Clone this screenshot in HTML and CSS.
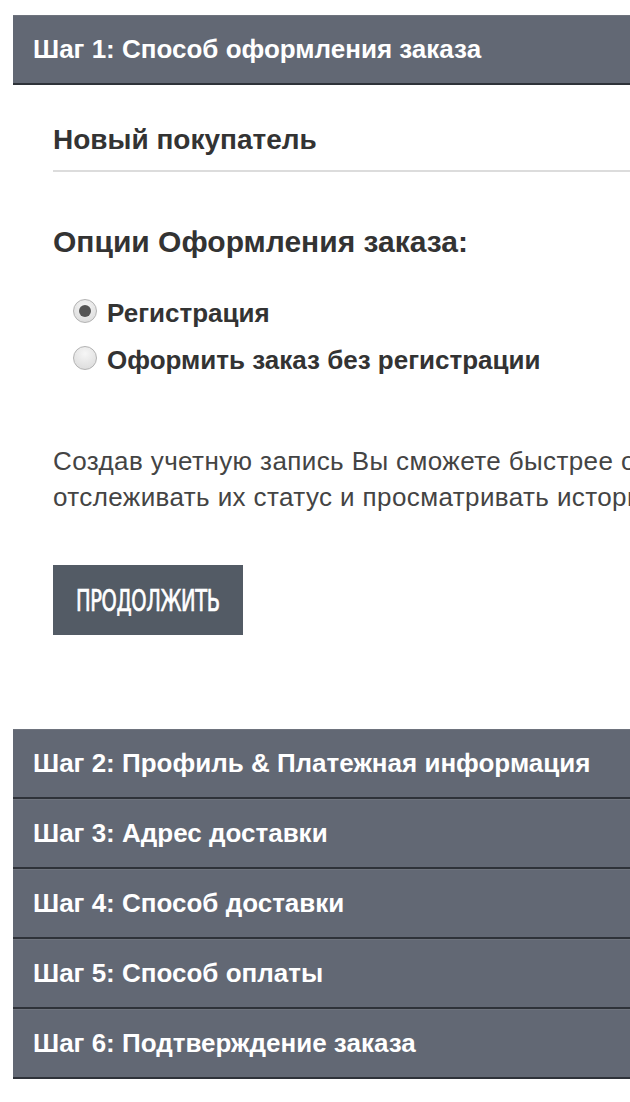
FILE: index.html
```html
<!DOCTYPE html>
<html lang="ru">
<head>
<meta charset="utf-8">
<title>Оформление заказа</title>
<link rel="stylesheet" href="styles.css">
</head>
<body>
<div class="checkout">
  <div class="step">
    <div class="step-head">Шаг 1: Способ оформления заказа</div>
    <div class="step-body">
      <h2 class="title">Новый покупатель</h2>
      <h3 class="subtitle">Опции Оформления заказа:</h3>
      <div class="radios">
        <label class="radio"><input type="radio" name="account" checked><span>Регистрация</span></label>
        <label class="radio"><input type="radio" name="account"><span>Оформить заказ без регистрации</span></label>
      </div>
      <p class="text">Создав учетную запись Вы сможете быстрее оформлять заказы, отслеживать их статус и просматривать историю покупок.</p>
      <button class="btn" type="button"><span class="btn-label">Продолжить</span></button>
    </div>
  </div>
  <div class="step"><div class="step-head">Шаг 2: Профиль &amp; Платежная информация</div></div>
  <div class="step"><div class="step-head">Шаг 3: Адрес доставки</div></div>
  <div class="step"><div class="step-head">Шаг 4: Способ доставки</div></div>
  <div class="step"><div class="step-head">Шаг 5: Способ оплаты</div></div>
  <div class="step"><div class="step-head">Шаг 6: Подтверждение заказа</div></div>
</div>
</body>
</html>
```
FILE: styles.css
```css
html, body {
  margin: 0;
  padding: 0;
  overflow: hidden;
  background: #fff;
}
body {
  font-family: "Liberation Sans", Arial, sans-serif;
  color: #333;
}
.checkout {
  width: 940px;
  margin: 15px 0 0 13px;
}
.step-head {
  background: #626874;
  color: #fff;
  font-weight: bold;
  font-size: 26px;
  height: 67px;
  line-height: 67px;
  padding-left: 20px;
  border-top: 1px solid #6e737d;
  border-bottom: 2px solid #2e3239;
}
.step-body {
  padding: 0 40px 94px 40px;
}
.title {
  margin: 0;
  padding: 39px 0 15px;
  font-size: 28px;
  line-height: 31px;
  font-weight: bold;
  color: #333;
  border-bottom: 2px solid #dcdcdc;
}
.subtitle {
  margin: 53px 0 0;
  font-size: 30px;
  line-height: 34px;
  font-weight: bold;
  color: #333;
}
.radios {
  margin: 39px 0 0 20px;
  display: flex;
  flex-direction: column;
  gap: 17px;
}
.radio {
  display: flex;
  align-items: center;
  gap: 10px;
  font-size: 26px;
  font-weight: bold;
  color: #333;
  line-height: 30px;
}
.radio input {
  appearance: none;
  -webkit-appearance: none;
  margin: 0;
  width: 24px;
  height: 24px;
  border-radius: 50%;
  border: 1px solid #b3b3b3;
  background: radial-gradient(circle at 50% 30%, #f6f6f6 0%, #d8d8d8 100%);
  position: relative;
  top: -2px;
  box-sizing: border-box;
  flex: none;
}
.radio input:checked::after {
  content: "";
  position: absolute;
  left: 5px;
  top: 5px;
  width: 12px;
  height: 12px;
  border-radius: 50%;
  background: #555;
}
.text {
  margin: 68px 0 0;
  font-size: 26px;
  line-height: 36px;
  letter-spacing: 0.4px;
  color: #444;
}
.btn {
  display: flex;
  align-items: center;
  justify-content: center;
  margin-top: 50px;
  width: 190px;
  height: 70px;
  background: #535b65;
  color: #fff;
  border: 0;
  border-radius: 0;
  padding: 0;
  font-family: "DejaVu Sans Condensed", "DejaVu Sans", sans-serif;
  font-size: 30px;
  text-transform: uppercase;
}
.btn-label {
  display: inline-block;
  transform: scaleX(0.72);
  letter-spacing: -0.5px;
  -webkit-text-stroke: 0.7px #fff;
}
```
